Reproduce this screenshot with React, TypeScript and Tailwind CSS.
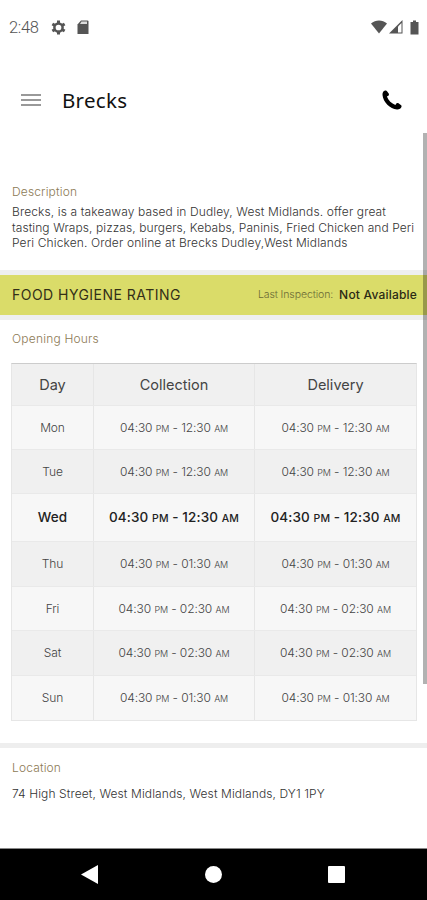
type Hours = {
  day: string;
  closes: string;
  height: string;
  today?: boolean;
};

const openingHours: Hours[] = [
  { day: "Mon", closes: "12:30", height: "h-[44px]" },
  { day: "Tue", closes: "12:30", height: "h-[44px]" },
  { day: "Wed", closes: "12:30", height: "h-[48px]", today: true },
  { day: "Thu", closes: "01:30", height: "h-[45px]" },
  { day: "Fri", closes: "02:30", height: "h-[44px]" },
  { day: "Sat", closes: "02:30", height: "h-[45px]" },
  { day: "Sun", closes: "01:30", height: "h-[45px]" },
];

function StatusBar() {
  return (
    <div className="flex h-[54px] items-center pl-[9px] pr-[8px] text-[#555]">
      <span className="w-[42px] pt-[2px] font-[Roboto] text-[16.5px] font-light tracking-[-0.3px]">
        2:48
      </span>
      <svg width="15" height="15" viewBox="0 0 15 15" stroke="currentColor">
        <circle cx="7.5" cy="7.5" r="4.1" fill="none" strokeWidth="2.5" />
        <path
          d="M7.5 .4v2.600M7.500 12v2.600M1.350 3.950l2.250 1.300M11.400 9.750l2.250 1.300M1.350 11.050l2.250-1.300M11.400 5.250l2.250-1.300"
          strokeWidth="3"
        />
      </svg>
      <svg className="ml-[11px]" width="12" height="15" viewBox="0 0 12 15">
        <path d="M4 .5h6.500a1 1 0 0 1 1 1V14H.5V4.500Z" fill="#555" />
        <path d="M4.500 1.500h5.500v2.500H3Z" fill="#ddd" />
      </svg>
      <div className="ml-auto flex items-center">
        <svg width="16" height="14" viewBox="0 0 16 14" fill="currentColor">
          <path d="M8 13.500 0 3.600C4.600-.4 11.400-.4 16 3.600Z" />
        </svg>
        <svg className="ml-[2px]" width="14" height="14" viewBox="0 0 14 14">
          <path d="M0 13.500 13.500 0V13.500Z" fill="currentColor" />
          <path d="M9 6.500 12.500 3V12.500H9Z" fill="white" />
        </svg>
        <svg
          className="ml-[7px]"
          width="9"
          height="15"
          viewBox="0 0 9 15"
          fill="currentColor"
        >
          <path d="M3 .5h3V2h2.500v12.500H.5V2H3Z" />
        </svg>
      </div>
    </div>
  );
}

function Header() {
  return (
    <div className="flex h-[92px] items-center pl-[21px] pr-[25px]">
      <div className="flex w-5 flex-col gap-[3px]">
        <span className="h-[2px] bg-[#999]" />
        <span className="h-[2px] bg-[#999]" />
        <span className="h-[2px] bg-[#999]" />
      </div>
      <h1 className="ml-[21px] font-['Noto_Sans'] text-[20.5px] tracking-[0.3px] text-[#111]">
        Brecks
      </h1>
      <svg className="ml-auto" width="20" height="20" viewBox="0 0 20 20">
        <path d="M3.200.5C1.300 1 .3 2.700.5 5 1.100 12 8 19 15 19.500c2.200.1 4-.9 4.500-2.800.2-.8-.1-1.300-.7-1.700l-2.300-1.700c-.9-.6-1.700-.4-2.200.3l-.9 1.500C9.600 13.700 6.300 10.400 4.900 6.600l1.500-.9c.6-.5.8-1.300.3-2.100L5 1.200C4.600.5 4 .3 3.200.5Z" />
      </svg>
    </div>
  );
}

function Time({ closes, today }: { closes: string; today?: boolean }) {
  const suffix = today ? "text-[10.5px]" : "text-[9px]";
  return (
    <>
      04:30 <span className={suffix}>PM</span> - {closes}{" "}
      <span className={suffix}>AM</span>
    </>
  );
}

function HoursTable() {
  return (
    <div className="ml-[11px] mr-[10px] mt-4 border border-t-[#ccc] border-[#e6e6e6] text-center">
      <div className="grid h-[41px] grid-cols-[82px_161px_1fr] items-stretch bg-[#f0f0f0] text-[14.5px] text-[#444]">
        <div className="flex items-center justify-center border-r border-[#e6e6e6]">
          Day
        </div>
        <div className="flex items-center justify-center border-r border-[#e6e6e6]">
          Collection
        </div>
        <div className="flex items-center justify-center">Delivery</div>
      </div>
      {openingHours.map(({ day, closes, height, today }, i) => (
        <div
          key={day}
          className={`grid grid-cols-[82px_161px_1fr] whitespace-nowrap border-t border-[#e9e9e9] ${height} ${
            i % 2 ? "bg-[#f0f0f0]" : "bg-[#f7f7f7]"
          } ${
            today
              ? "text-[13.5px] font-medium tracking-[0.1px] text-[#222]"
              : "text-[12px] font-light tracking-[-0.1px] text-[#444]"
          }`}
        >
          <div className="flex items-center justify-center border-r border-[#e6e6e6]">
            {day}
          </div>
          <div className="flex items-center justify-center border-r border-[#e6e6e6]">
            <p>
              <Time closes={closes} today={today} />
            </p>
          </div>
          <div className="flex items-center justify-center">
            <p>
              <Time closes={closes} today={today} />
            </p>
          </div>
        </div>
      ))}
    </div>
  );
}

function NavBar() {
  return (
    <div className="flex h-[52px] items-center justify-between border-t border-[#888] bg-black pl-[81px] pr-[82px]">
      <svg width="17" height="19" viewBox="0 0 17 19" fill="white">
        <path d="M0 9.500 17 0V19Z" />
      </svg>
      <span className="h-[17px] w-[17px] rounded-full bg-white" />
      <span className="h-[17px] w-[17px] rounded-[1px] bg-white" />
    </div>
  );
}

function App() {
  return (
    <div className="relative flex h-[900px] w-[427px] flex-col overflow-hidden bg-white font-[Inter,sans-serif]">
      <StatusBar />
      <Header />
      <section className="h-[124px] px-3 pt-[38px]">
        <h2 className="text-[12px] font-light leading-4 tracking-[0.15px] text-[#8c7a55]">
          Description
        </h2>
        <div className="mt-[4px] whitespace-nowrap text-[12px] font-light leading-[15.7px] text-[#333]">
          <p className="tracking-[0.12px]">
            Brecks, is a takeaway based in Dudley, West Midlands. offer great
          </p>
          <p className="tracking-[0.08px]">
            tasting Wraps, pizzas, burgers, Kebabs, Paninis, Fried Chicken and
            Peri
          </p>
          <p className="tracking-[0.13px]">
            Peri Chicken. Order online at Brecks Dudley,West Midlands
          </p>
        </div>
      </section>
      <div className="flex h-[50px] items-center whitespace-nowrap border-y-[5px] border-[#eeefef] bg-[#dadc69] pb-px pl-3 pr-[10px]">
        <span className="text-[14px] tracking-[0.47px] text-[#332f18]">
          FOOD HYGIENE RATING
        </span>
        <span className="ml-auto text-[10.5px] font-light tracking-[-0.1px] text-[#6b6a35]">
          Last Inspection:
        </span>
        <span className="ml-[6px] text-[12px] font-medium tracking-[0.2px] text-[#2b2a15]">
          Not Available
        </span>
      </div>
      <h2 className="mt-[11px] px-3 text-[12px] font-light leading-4 tracking-[0.2px] text-[#8c7a55]">
        Opening Hours
      </h2>
      <HoursTable />
      <div className="mt-[22px] h-[5px] bg-[#eee]" />
      <section className="px-3 pt-[12px]">
        <h2 className="text-[12px] font-light leading-4 tracking-[0.15px] text-[#8c7a55]">
          Location
        </h2>
        <p className="mt-[10px] whitespace-nowrap text-[12px] font-light leading-4 tracking-[0.1px] text-[#333]">
          74 High Street, West Midlands, West Midlands, DY1 1PY
        </p>
      </section>
      <div className="mt-auto">
        <NavBar />
      </div>
      {/* scroll indicator */}
      <div className="absolute right-0 top-[133px] h-[551px] w-1 bg-black/30" />
    </div>
  );
}

export default App;
